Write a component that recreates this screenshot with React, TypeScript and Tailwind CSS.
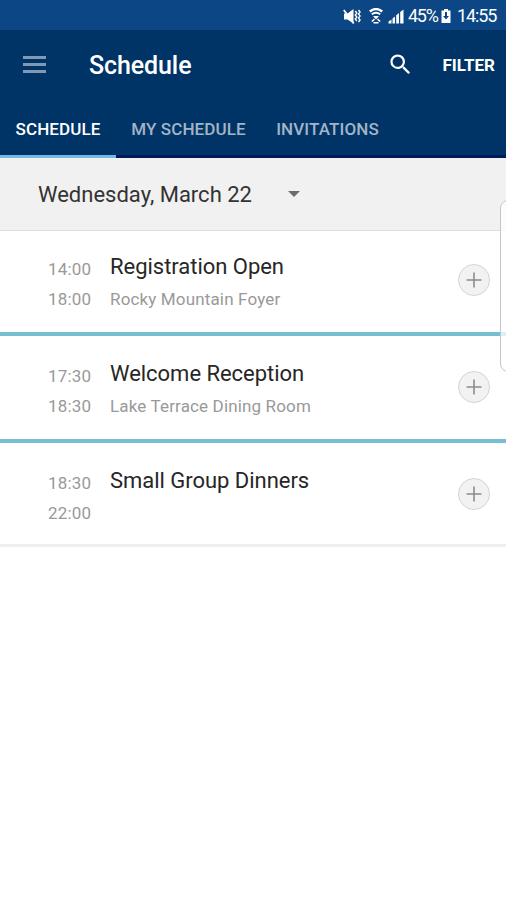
import clsx from "clsx";
import { MdSearch } from "react-icons/md";

type Session = {
    start: string,
    end: string,
    title: string,
    place?: string,
}

const sessions: Session[] = [
    { start: "14:00", end: "18:00", title: "Registration Open", place: "Rocky Mountain Foyer" },
    { start: "17:30", end: "18:30", title: "Welcome Reception", place: "Lake Terrace Dining Room" },
    { start: "18:30", end: "22:00", title: "Small Group Dinners" },
]

const tabs = [
    { label: "SCHEDULE", width: "w-[116px]", active: true },
    { label: "MY SCHEDULE", width: "w-[145px]", active: false },
    { label: "INVITATIONS", width: "w-[133px]", active: false },
]

function StatusBar() {
    return (
        <div className="flex h-[30px] items-center justify-end bg-[#0c4684] pr-[10px] pt-[2px] text-white">
            <svg className="mr-[8px] h-[17px] w-[18px] shrink-0" viewBox="0 0 18 17" fill="none" stroke="currentColor">
                <path d="M1 5.500h3.500L10.500 1v14.500L4.500 11.500H1z" fill="currentColor" stroke="none" />
                <path d="M0.800 2l10 13.500" strokeWidth="1.800" />
                <path d="M12.300 3l1.500 2-1.500 2 1.500 2-1.500 2 1.500 2M15.500 2L17 4l-1.500 2L17 8l-1.500 2 1.500 2-1.500 2" strokeWidth="1.400" />
            </svg>
            <svg className="mr-[5px] h-[16px] w-[14px] shrink-0" viewBox="0 0 14 16" fill="none" stroke="currentColor">
                <path d="M0.800 3.500c3.800-3 8.600-3 12.400 0" strokeWidth="2.400" />
                <path d="M2.800 6.300c2.600-2 5.800-2 8.400 0" strokeWidth="2" />
                <path d="M4 8h6l-3 3.500z" fill="currentColor" stroke="none" />
                <path d="M2.800 13.500l2.700-2.300M11.200 13.500l-2.700-2.300M4.500 14.800h5" strokeWidth="1.600" />
            </svg>
            <svg className="mr-[4px] h-[15px] w-[16px] shrink-0" viewBox="0 0 16 15" fill="currentColor">
                <path d="M0.500 14.500v-2l3-2v4zM4.500 14.500V9.500l2.500-2v7zM8.200 14.500V6.300L11 4v10.500zM12.200 14.500V3L15.500 0.500v14z" />
            </svg>
            <span className="w-[33px] shrink-0 whitespace-nowrap text-[18px] leading-[20px] tracking-[-1.300px]">45%</span>
            <svg className="mr-[6px] h-[14px] w-[10px] shrink-0" viewBox="0 0 10 14">
                <path d="M3 0h4v1.500h2.500V14h-9V1.500H3z" fill="currentColor" />
                <path d="M4 3h2v4h2L5 10.500 2 7h2z" fill="#0c4684" />
            </svg>
            <span className="w-[39px] whitespace-nowrap text-[18px] leading-[20px] tracking-[-1.100px]">14:55</span>
        </div>
    )
}

function MenuIcon() {
    return (
        <svg className="-mt-[2px] ml-[23px] h-[17px] w-[23px]" viewBox="0 0 23 17" fill="#8199b5">
            <path d="M0 0h23v3H0zM0 7h23v3H0zM0 14h23v3H0z" />
        </svg>
    )
}

function AddButton() {
    return (
        <button className="mr-4 mt-[35px] flex size-8 shrink-0 items-center justify-center rounded-full border-[1.500px] border-[#d4d4d4] bg-[#f2f2f2]">
            <svg className="size-4" viewBox="0 0 16 16" stroke="#8c8c8c" strokeWidth="1.600">
                <path d="M8 0.500v15M0.500 8h15" />
            </svg>
        </button>
    )
}

function SessionRow({ session, last }: { session: Session, last: boolean }) {
    return (
        <div className={clsx("flex", last ? "h-[104px] border-b-[3px] border-[#efefef]" : "h-[107px] border-b-[4px] border-[#76bfd2]")}>
            <div className="w-[110px] shrink-0 pl-[48px] pt-[25px] text-[17px] leading-[30px] tracking-[0.2px] text-[#999999]">
                <p>{session.start}</p>
                <p>{session.end}</p>
            </div>
            <div className="flex-1 whitespace-nowrap pt-[22px]">
                <p className="text-[22px] leading-[32px] tracking-[-0.030px] text-[#262626]">{session.title}</p>
                {session.place && (
                    <p className="mt-px text-[17px] leading-[30px] tracking-[0.150px] text-[#999999]">{session.place}</p>
                )}
            </div>
            <AddButton />
        </div>
    )
}

function App() {
    return (
        <div className="relative h-[900px] w-[506px] overflow-hidden bg-white font-['Roboto',sans-serif]">
            <StatusBar />
            <header className="h-[128px] bg-[#003466] text-white">
                <div className="flex h-[71px] items-center pr-[11px]">
                    <MenuIcon />
                    <h1 className="ml-[43px] text-[25px] font-medium leading-[30px] tracking-[-0.100px]">Schedule</h1>
                    <MdSearch className="-mt-[3px] ml-auto size-[27px]" />
                    <span className="ml-[28px] text-[17px] font-bold">FILTER</span>
                </div>
                <nav className="flex h-[57px]">
                    {tabs.map((tab) => (
                        <div key={tab.label} className={clsx("flex items-center justify-center whitespace-nowrap border-b-[3px] pt-[3px] text-[17px] font-medium tracking-[0.100px]",
                            tab.width, tab.active ? "border-[#72b9e4]" : "border-[#001a5c] text-[#a3b4c8]")}>
                            {tab.label}
                        </div>
                    ))}
                    <div className="flex-1 border-b-[3px] border-[#001a5c]" />
                </nav>
            </header>
            <div className="flex h-[73px] items-center border-b-[1.500px] border-[#dedede] bg-[#f1f1f1] pl-[38px]">
                <span className="w-[250px] text-[22px] text-[#333333]">Wednesday, March 22</span>
                <svg className="h-[6px] w-3" viewBox="0 0 12 6" fill="#6c6c6c">
                    <path d="M0 0h12L6 6z" />
                </svg>
            </div>
            <div className="-mt-[2px]">
                {sessions.map((session, idx) => (
                    <SessionRow key={session.title} session={session} last={idx === sessions.length - 1} />
                ))}
            </div>
            {/* edge panel handle */}
            <div className="absolute -right-3 top-[200px] h-[172px] w-[18px] rounded-lg border border-[#c6c6c6] bg-white/75" />
        </div>
    )
}

export default App
